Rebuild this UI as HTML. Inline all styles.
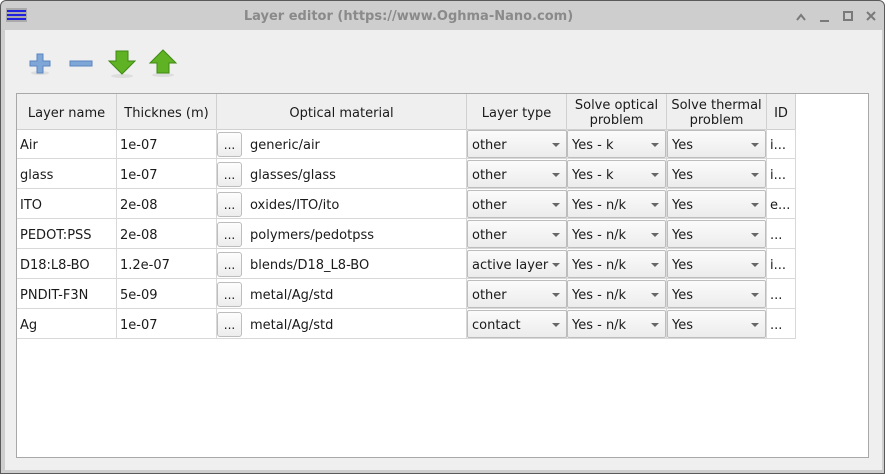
<!DOCTYPE html>
<html><head><meta charset="utf-8"><style>
*{box-sizing:border-box;margin:0;padding:0}
body{width:885px;height:474px;background:#fff;font-family:"DejaVu Sans","Liberation Sans",sans-serif;font-size:13px;color:#1a1a1a;position:relative;overflow:hidden}
.win{position:absolute;left:0;top:0;width:885px;height:474px;background:#cecece;border:1px solid #5a5a5a;border-radius:6px 6px 0 0}
.content{position:absolute;left:4px;top:29px;width:877px;height:440px;background:#efefef}
.title{position:absolute;left:0;top:8px;width:815px;text-align:center;font-weight:bold;font-size:13px;color:#8a8a8a}
.tbl{position:absolute;left:16px;top:93px;width:853px;height:365px;background:#fff;border:1px solid #a8a8a8}
.hd{position:absolute;top:0;height:36px;padding-top:3px;background:#efefef;border-right:1px solid #d0d0d0;border-bottom:1px solid #d0d0d0;text-align:center;display:flex;align-items:center;justify-content:center;line-height:15px}
.c{position:absolute;height:30px;border-right:1px solid #d8d8d8;border-bottom:1px solid #d8d8d8;line-height:33px;padding-left:3px}
.cb{position:absolute;height:28px;border:1px solid #bdbdbd;border-radius:2px;background:linear-gradient(#fbfbfb,#ececec);line-height:30px;padding-left:4px}
.cb::after{content:"";position:absolute;right:6px;top:12px;border-left:4px solid transparent;border-right:4px solid transparent;border-top:4px solid #666}
.btn{position:absolute;width:25px;height:25px;border:1px solid #bdbdbd;border-radius:3px;background:linear-gradient(#fdfdfd,#ededed);text-align:center;line-height:24px;font-size:12px}
</style></head><body>
<div class="win">
<div style="position:absolute;left:5px;top:7px;width:21px;height:14px;background:#aaa;padding:2px 1px">
<div style="height:2px;background:#2020e0;margin-bottom:2px"></div><div style="height:2px;background:#2020e0;margin-bottom:2px"></div><div style="height:2px;background:#2020e0"></div></div>
<div class="title">Layer editor (https://www.Oghma-Nano.com)</div>
<svg style="position:absolute;left:790px;top:8px" width="90" height="16">
<path d="M6 11 L10 6 L14 11" fill="none" stroke="#7a7a7a" stroke-width="2"/>
<rect x="29" y="11" width="9" height="2" fill="#7a7a7a"/>
<rect x="53" y="3" width="8" height="8" fill="none" stroke="#7a7a7a" stroke-width="2"/>
<path d="M76 3 L84 11 M84 3 L76 11" stroke="#7a7a7a" stroke-width="2"/>
</svg>
<div class="content"></div>
</div>
<svg style="position:absolute;left:25px;top:45px" width="160" height="35">
<ellipse cx="15" cy="28" rx="9" ry="2" fill="#ddd"/>
<path d="M12 9h6v7h7v5h-7v7h-6v-7h-7v-5h7z" fill="#7ea7d8" stroke="#5b86bf"/>
<rect x="45" y="16" width="22" height="5" fill="#7ea7d8" stroke="#5b86bf"/>
<ellipse cx="97" cy="31" rx="11" ry="2" fill="#ddd"/>
<path d="M91 6h12v10h7l-13 13-13-13h7z" fill="#5fb224" stroke="#3e8a12"/>
<ellipse cx="138" cy="30" rx="11" ry="2" fill="#ddd"/>
<path d="M138 5l13 13h-7v10h-12v-10h-7z" fill="#5fb224" stroke="#3e8a12"/>
</svg>
<div class="tbl">
<div class="hd" style="left:0;width:100px">Layer name</div>
<div class="hd" style="left:100px;width:100px">Thicknes (m)</div>
<div class="hd" style="left:200px;width:250px">Optical material</div>
<div class="hd" style="left:450px;width:100px">Layer type</div>
<div class="hd" style="left:550px;width:100px">Solve optical<br>problem</div>
<div class="hd" style="left:650px;width:100px">Solve thermal<br>problem</div>
<div class="hd" style="left:750px;width:29px">ID</div>
</div>
<div id="rows"></div>
<script>
var d=[["Air","1e-07","generic/air","other","Yes - k","i..."],["glass","1e-07","glasses/glass","other","Yes - k","i..."],["ITO","2e-08","oxides/ITO/ito","other","Yes - n/k","e..."],["PEDOT:PSS","2e-08","polymers/pedotpss","other","Yes - n/k","..."],["D18:L8-BO","1.2e-07","blends/D18_L8-BO","active layer","Yes - n/k","i..."],["PNDIT-F3N","5e-09","metal/Ag/std","other","Yes - n/k","..."],["Ag","1e-07","metal/Ag/std","contact","Yes - n/k","..."]];
var h="";d.forEach(function(r,i){var y=129+i*30;
h+='<div class="c" style="left:17px;top:'+y+'px;width:100px">'+r[0]+'</div>';
h+='<div class="c" style="left:117px;top:'+y+'px;width:100px">'+r[1]+'</div>';
h+='<div class="c" style="left:217px;top:'+y+'px;width:250px;padding-left:33px">'+r[2]+'</div>';
h+='<div class="btn" style="left:217px;top:'+(y+3)+'px">...</div>';
h+='<div class="c" style="left:467px;top:'+y+'px;width:100px"></div><div class="c" style="left:567px;top:'+y+'px;width:100px"></div><div class="c" style="left:667px;top:'+y+'px;width:100px"></div>';
h+='<div class="cb" style="left:467px;top:'+(y+1)+'px;width:100px">'+r[3]+'</div>';
h+='<div class="cb" style="left:567px;top:'+(y+1)+'px;width:99px">'+r[4]+'</div>';
h+='<div class="cb" style="left:667px;top:'+(y+1)+'px;width:99px">Yes</div>';
h+='<div class="c" style="left:767px;top:'+y+'px;width:29px">'+r[5]+'</div>';});
document.getElementById("rows").innerHTML=h;
</script>
</body></html>
